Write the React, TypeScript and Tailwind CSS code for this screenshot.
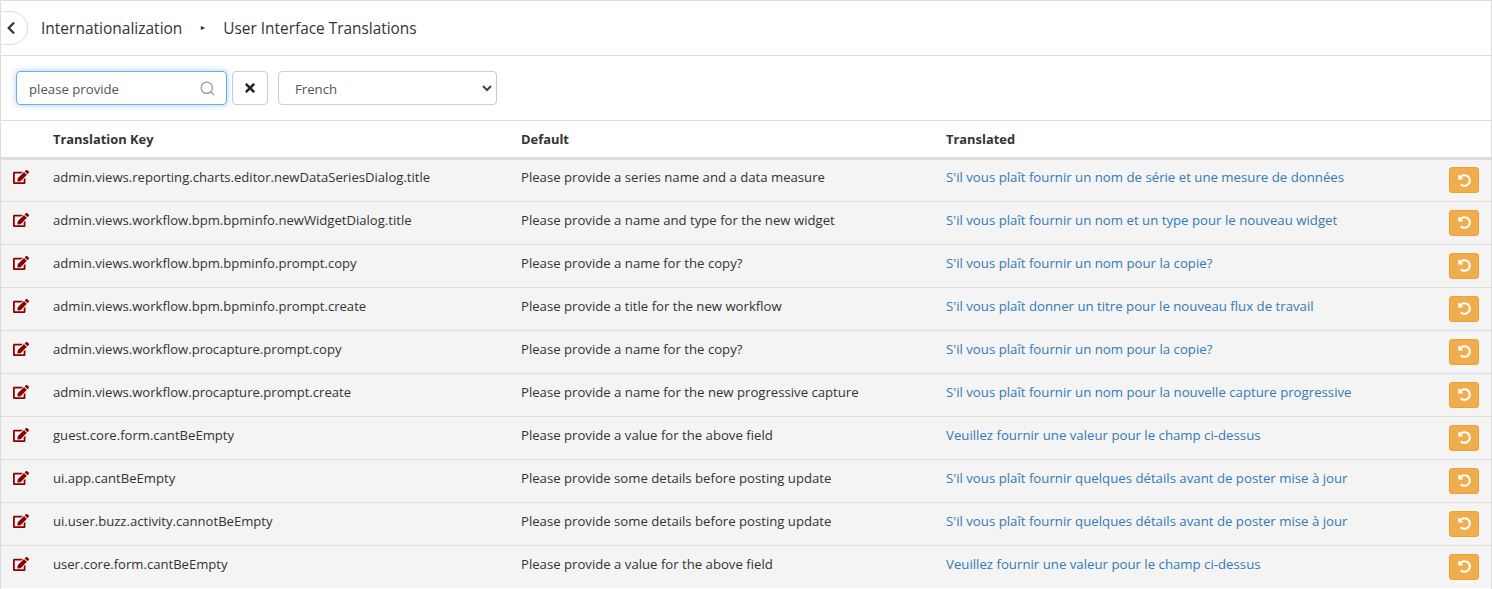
import { FaChevronLeft, FaEdit, FaTimes, FaUndoAlt } from 'react-icons/fa'
import { Search } from 'lucide-react'

const rows = [
  ['admin.views.reporting.charts.editor.newDataSeriesDialog.title', 'Please provide a series name and a data measure', "S'il vous plaît fournir un nom de série et une mesure de données"],
  ['admin.views.workflow.bpm.bpminfo.newWidgetDialog.title', 'Please provide a name and type for the new widget', "S'il vous plaît fournir un nom et un type pour le nouveau widget"],
  ['admin.views.workflow.bpm.bpminfo.prompt.copy', 'Please provide a name for the copy?', "S'il vous plaît fournir un nom pour la copie?"],
  ['admin.views.workflow.bpm.bpminfo.prompt.create', 'Please provide a title for the new workflow', "S'il vous plaît donner un titre pour le nouveau flux de travail"],
  ['admin.views.workflow.procapture.prompt.copy', 'Please provide a name for the copy?', "S'il vous plaît fournir un nom pour la copie?"],
  ['admin.views.workflow.procapture.prompt.create', 'Please provide a name for the new progressive capture', "S'il vous plaît fournir un nom pour la nouvelle capture progressive"],
  ['guest.core.form.cantBeEmpty', 'Please provide a value for the above field', 'Veuillez fournir une valeur pour le champ ci-dessus'],
  ['ui.app.cantBeEmpty', 'Please provide some details before posting update', "S'il vous plaît fournir quelques détails avant de poster mise à jour"],
  ['ui.user.buzz.activity.cannotBeEmpty', 'Please provide some details before posting update', "S'il vous plaît fournir quelques détails avant de poster mise à jour"],
  ['user.core.form.cantBeEmpty', 'Please provide a value for the above field', 'Veuillez fournir une valeur pour le champ ci-dessus'],
]

const App = () => {
  return (
    <div className="h-[589px] overflow-hidden border-x border-t border-[#ddd] bg-white font-['Open_Sans',sans-serif] text-[13px] text-[#333]">
      <div className="flex h-[55px] items-center border-b border-[#ddd]">
        <button className="-ml-[17px] flex h-[34px] w-[44px] items-center justify-end rounded-full border border-[#ddd] bg-white pr-[9px] text-[#333]">
          <FaChevronLeft className="text-[14px]" />
        </button>
        <span className="ml-[13px] pt-px text-[15.5px] font-medium text-[#333]">Internationalization</span>
        <span className="ml-[17px] mr-[17px] text-[7px] text-[#333]">►</span>
        <span className="pt-px text-[15.4px] font-medium text-[#333]">User Interface Translations</span>
      </div>

      <div className="flex h-[65px] items-center border-b border-[#ddd] pl-[15px]">
        <div className="flex h-[34px] w-[211px] items-center justify-between rounded border border-[#66afe9] pl-3 pr-[10px] shadow-[0_0_6px_rgba(102,175,233,0.6)]">
          <span className="pt-[3px] text-[13.2px] text-[#555]">please provide</span>
          <Search size={17} strokeWidth={1.75} className="text-[#999]" />
        </div>
        <button className="ml-[5px] flex h-[34px] w-[36px] items-center justify-center rounded border border-[#ccc] bg-white">
          <FaTimes className="-mt-px text-[14px] text-[#222]" />
        </button>
        <div className="ml-[10px] flex h-[34px] w-[219px] items-center justify-between rounded border border-[#ccc] pl-4 pr-[3px] text-[#555]">
          <span className="pt-[3px] text-[13.2px]">French</span>
          <svg viewBox="0 0 12 12" className="h-[12px] w-[12px]" fill="none" stroke="#444" strokeWidth="2">
            <path d="M2 4l4 4 4-4" />
          </svg>
        </div>
      </div>

      <table className="w-full table-fixed border-collapse">
        <thead>
          <tr className="h-[37px] border-b-[3px] border-[#ddd]">
            <th className="w-[52px]" />
            <th className="w-[468px] pt-[2px] text-left text-[12.9px] font-bold text-[#333]">Translation Key</th>
            <th className="w-[425px] pt-[2px] text-left text-[12.9px] font-bold text-[#333]">Default</th>
            <th className="pt-[2px] text-left text-[12.9px] font-bold text-[#333]">Translated</th>
            <th className="w-[60px]" />
          </tr>
        </thead>
        <tbody>
          {rows.map((row) => (
            <tr key={row[0]} className="h-[43px] border-b border-[#ddd] bg-[#f4f4f4] last:border-b-0">
              <td className="pb-[6px] pl-3">
                <FaEdit className="text-[16px] text-[#8b0000]" />
              </td>
              <td className="pb-[4px] text-[13.1px]">{row[0]}</td>
              <td className="pb-[4px] text-[13.17px]">{row[1]}</td>
              <td className="pb-[4px] text-[13.23px] text-[#337ab7]">{row[2]}</td>
              <td>
                <button className="ml-[18px] flex h-[26px] w-[30px] items-center justify-center rounded-[3px] border border-[#eea236] bg-[#f0ad4e] text-white">
                  <FaUndoAlt className="text-[13px]" />
                </button>
              </td>
            </tr>
          ))}
        </tbody>
      </table>
    </div>
  )
}

export default App
